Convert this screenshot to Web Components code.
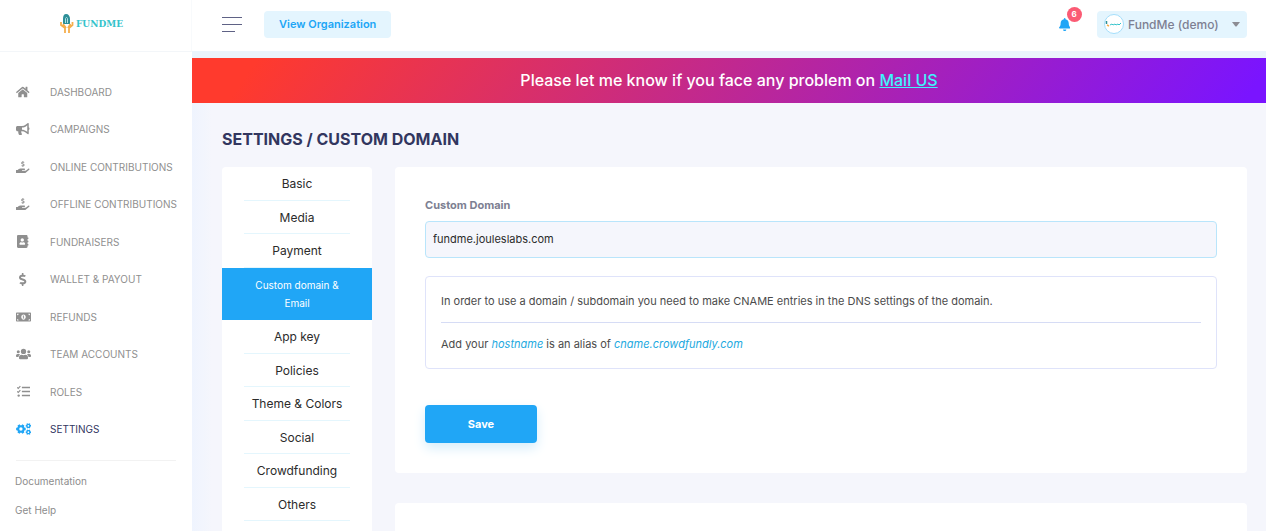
<!DOCTYPE html>
<html lang="en">
<head>
<meta charset="utf-8">
<meta name="viewport" content="width=device-width, initial-scale=1">
<title>Settings / Custom Domain</title>
<style>
  :root {
    --blue: #20a6f6;
    --pale: #e4f5fe;
    --navy: #32365f;
    --muted: #7d7f92;
    --page: #f5f6fc;
  }
  * { box-sizing: border-box; }
  body { margin: 0; background: var(--page); font-family: Inter, "Liberation Sans", sans-serif; color: #2b2b2b; }
</style>
</head>
<body>
<fm-app>
  <fm-sidebar slot="side">
    <fm-link icon="home">DASHBOARD</fm-link>
    <fm-link icon="horn">CAMPAIGNS</fm-link>
    <fm-link icon="hand">ONLINE CONTRIBUTIONS</fm-link>
    <fm-link icon="hand">OFFLINE CONTRIBUTIONS</fm-link>
    <fm-link icon="book">FUNDRAISERS</fm-link>
    <fm-link icon="dollar">WALLET &amp; PAYOUT</fm-link>
    <fm-link icon="bill">REFUNDS</fm-link>
    <fm-link icon="team">TEAM ACCOUNTS</fm-link>
    <fm-link icon="tasks">ROLES</fm-link>
    <fm-link icon="cogs" active>SETTINGS</fm-link>
  </fm-sidebar>
  <fm-topbar slot="top"></fm-topbar>
  <fm-banner>Please let me know if you face any problem on</fm-banner>
  <fm-settings>
    <fm-tab slot="tabs">Basic</fm-tab>
    <fm-tab slot="tabs">Media</fm-tab>
    <fm-tab slot="tabs">Payment</fm-tab>
    <fm-tab slot="tabs" active>Custom domain &amp; Email</fm-tab>
    <fm-tab slot="tabs">App key</fm-tab>
    <fm-tab slot="tabs">Policies</fm-tab>
    <fm-tab slot="tabs">Theme &amp; Colors</fm-tab>
    <fm-tab slot="tabs">Social</fm-tab>
    <fm-tab slot="tabs">Crowdfunding</fm-tab>
    <fm-tab slot="tabs">Others</fm-tab>
    <fm-card><fm-domain-form></fm-domain-form></fm-card>
    <fm-card></fm-card>
  </fm-settings>
</fm-app>

<script>
const DOLLAR = 'M209.2 233.4l-108-31.6C88.7 198.2 80 186.5 80 173.5c0-16.3 13.2-29.5 29.5-29.5h66.3c12.2 0 24.2 3.7 34.2 10.5 6.1 4.1 14.3 3.1 19.5-2l34.8-34c7.1-6.9 6.1-18.4-1.8-24.5C238 74.8 207.4 64.1 176 64V16c0-8.8-7.2-16-16-16h-32c-8.8 0-16 7.2-16 16v48h-2.5C45.8 64-5.4 118.7.5 183.6c4.2 46.1 39.4 83.6 83.8 96.6l102.5 30c12.5 3.7 21.2 15.3 21.2 28.3 0 16.3-13.2 29.5-29.5 29.5h-66.3C100 368 88 364.3 78 357.5c-6.1-4.1-14.3-3.1-19.5 2l-34.8 34c-7.1 6.9-6.1 18.4 1.8 24.5 24.5 19.2 55.1 29.9 86.5 30v48c0 8.8 7.2 16 16 16h32c8.8 0 16-7.2 16-16v-48.2c46.6-.9 90.3-28.6 105.7-72.7 21.5-61.6-14.6-124.8-72.5-141.7z';

// Ring with teeth, used for the settings icon.
const gear = (cx, cy, r, hole, n) => {
  let d = '';
  for (let i = 0; i < n; i++) {
    const at = (f, k) => {
      const a = (i + f) / n * 2 * Math.PI;
      return (cx + Math.cos(a) * r * k).toFixed(1) + ' ' + (cy + Math.sin(a) * r * k).toFixed(1);
    };
    d += (i ? 'L' : 'M') + at(-.24, 1) + 'L' + at(.24, 1) + 'L' + at(.32, .8) + 'L' + at(.68, .8);
  }
  return `<path fill-rule="evenodd" d="${d}ZM${cx - hole} ${cy}a${hole} ${hole} 0 1 0 ${2 * hole} 0a${hole} ${hole} 0 1 0 ${-2 * hole} 0z"/>`;
};

const ICONS = {
  home: ['0 0 576 512', '<path d="M280.37 148.26L96 300.11V464a16 16 0 0 0 16 16l112.06-.29a16 16 0 0 0 15.92-16V368a16 16 0 0 1 16-16h64a16 16 0 0 1 16 16v95.64a16 16 0 0 0 16 16.05L464 480a16 16 0 0 0 16-16V300L295.67 148.26a12.19 12.19 0 0 0-15.3 0zM571.6 251.47L488 182.56V44.05a12 12 0 0 0-12-12h-56a12 12 0 0 0-12 12v72.61L318.47 43a48 48 0 0 0-61 0L4.34 251.47a12 12 0 0 0-1.6 16.9l25.5 31A12 12 0 0 0 45.15 301l235.22-193.74a12.19 12.19 0 0 1 15.3 0L530.9 301a12 12 0 0 0 16.9-1.6l25.5-31a12 12 0 0 0-1.7-16.93z"/>'],
  horn: ['0 0 576 512', '<path d="M576 240c0-23.63-12.95-44.04-32-55.12V32.01C544 23.26 537.02 0 512 0c-7.12 0-14.19 2.38-19.98 7.02l-85.03 68.03C364.28 109.19 310.66 128 256 128H64c-35.35 0-64 28.65-64 64v96c0 35.35 28.65 64 64 64h33.7c-1.39 10.48-2.18 21.14-2.18 32 0 39.77 9.26 77.35 25.56 110.94 5.19 10.69 16.52 17.06 28.4 17.06h74.28c26.05 0 41.69-29.84 25.9-50.56-16.4-21.52-26.15-48.36-26.15-77.44 0-11.11 1.62-21.79 4.41-32H256c54.66 0 108.28 18.81 150.98 52.95l85.03 68.03a32.023 32.023 0 0 0 19.98 7.02c24.92 0 32-22.78 32-32V295.13C563.05 284.04 576 263.63 576 240zm-96 141.42l-33.05-26.44C392.95 311.78 325.12 288 256 288v-96c69.12 0 136.95-23.78 190.95-66.98L480 98.58v282.84z"/>'],
  hand: ['0 0 576 512', `<path d="M565.3 328.1c-11.8-10.7-30.2-10-42.6 0L430.3 402c-11.3 9.1-25.4 14-40 14H272c-8.8 0-16-7.2-16-16s7.2-16 16-16h78.3c15.9 0 30.7-10.9 33.3-26.6 3.3-20-12.1-37.4-31.6-37.4H192c-27 0-53.1 9.3-74.1 26.3L71.4 384H16c-8.8 0-16 7.2-16 16v96c0 8.8 7.2 16 16 16h356.8c14.5 0 28.6-4.9 40-14L564 377c15.2-12.1 16.4-35.3 1.3-48.9z"/><path transform="translate(222 0) scale(.5)" d="${DOLLAR}"/>`],
  book: ['0 0 448 512', '<path d="M436 160c6.6 0 12-5.4 12-12v-40c0-6.6-5.4-12-12-12h-20V48c0-26.5-21.5-48-48-48H48C21.5 0 0 21.5 0 48v416c0 26.5 21.5 48 48 48h320c26.5 0 48-21.5 48-48v-48h20c6.6 0 12-5.4 12-12v-40c0-6.6-5.4-12-12-12h-20v-64h20c6.6 0 12-5.4 12-12v-40c0-6.6-5.4-12-12-12h-20v-64h20zm-228-32c35.3 0 64 28.7 64 64s-28.7 64-64 64-64-28.7-64-64 28.7-64 64-64zm112 236.8c0 10.6-10 19.2-22.4 19.2H118.4C106 384 96 375.4 96 364.8v-19.2c0-31.8 30.1-57.6 67.2-57.6h5c12.3 5.1 25.7 8 39.8 8s27.6-2.9 39.8-8h5c37.1 0 67.2 25.8 67.2 57.6v19.2z"/>'],
  dollar: ['0 0 288 512', `<path d="${DOLLAR}"/>`],
  bill: ['0 0 640 512', '<path fill-rule="evenodd" d="M32 64h576q32 0 32 32v320q0 32-32 32H32q-32 0-32-32V96q0-32 32-32zM320 144c-53 0-96 50-96 112s43 112 96 112 96-50 96-112-43-112-96-112zM48 112v64q64 0 64-64zM592 112v64q-64 0-64-64zM48 400v-64q64 0 64 64zM592 400v-64q-64 0-64 64z"/><path d="M304 192h32v96h16v32h-64v-32h16v-56h-16v-30z"/>'],
  team: ['0 0 640 512', '<circle cx="96" cy="160" r="64"/><circle cx="544" cy="160" r="64"/><circle cx="320" cy="144" r="112"/><path d="M64 256h64q26 0 45 19-58 32-69 109H32q-32 0-32-32v-32q0-64 64-64zM576 256h-64q-26 0-45 19 58 32 69 109h72q32 0 32-32v-32q0-64-64-64zM243 288q77 36 154 0 115 0 115 115v29q0 48-48 48H176q-48 0-48-48v-29q0-115 115-115z"/>'],
  tasks: ['0 0 512 512', '<g fill="none" stroke="currentColor" stroke-width="44"><path d="M8 92l42 40L132 44M8 252l42 40 82-88"/><path stroke-width="62" d="M192 96h320M192 256h320M192 416h320"/></g><circle cx="66" cy="416" r="46"/>'],
  cogs: ['0 0 640 512', gear(210, 256, 210, 72, 6) + gear(528, 120, 118, 36, 6) + gear(528, 392, 118, 36, 6)],
  bell: ['0 0 448 512', '<path d="M224 512c35.32 0 63.97-28.65 63.97-64H160.03c0 35.35 28.65 64 63.97 64zm215.39-149.71c-19.32-20.76-55.47-51.99-55.47-154.29 0-77.7-54.48-139.9-127.94-155.16V32c0-17.67-14.32-32-31.98-32s-31.98 14.33-31.98 32v20.84C118.56 68.1 64.08 130.3 64.08 208c0 102.3-36.15 133.53-55.47 154.29-6 6.45-8.66 14.16-8.61 21.71.11 16.4 12.98 32 32.1 32h383.8c19.12 0 32-15.6 32.1-32 .05-7.55-2.61-15.27-8.61-21.71z"/>']
};
const icon = (name, h) => {
  const [box, body] = ICONS[name];
  return `<svg viewBox="${box}" height="${h}" fill="currentColor" aria-hidden="true">${body}</svg>`;
};

const BASE = '*{box-sizing:border-box}a{color:inherit;text-decoration:none}button,input{font:inherit}svg{display:block;flex:none}';
const define = (tag, css, html) => customElements.define(tag, class extends HTMLElement {
  constructor() {
    super();
    this.attachShadow({ mode: 'open' }).innerHTML =
      `<style>${BASE}${css}</style>${typeof html === 'function' ? html(this) : html}`;
  }
});

define('fm-app', `
  :host{display:grid;grid-template-columns:192px minmax(0,1fr);height:100vh;overflow:hidden}
  .main{min-width:0;overflow:hidden;background:linear-gradient(90deg,#eff4fe,var(--page) 20px)}
`, `<slot name="side"></slot><div class="main"><slot name="top"></slot><main><slot></slot></main></div>`);

define('fm-sidebar', `
  :host{display:block;background:#fff;font-size:10px;color:#8d8d8d}
  .logo{display:flex;align-items:center;justify-content:center;gap:2px;height:52px;padding:0 8px 4px 0;
    border-bottom:1px solid #f3f6f9;border-right:1px solid #f8fafc;
    font:bold 9px "DejaVu Serif",serif;color:#35c3cb}
  nav{padding-top:21px}
  ::slotted(:nth-child(odd)){height:37px}
  .foot{display:flex;flex-direction:column;margin:12px 16px 0;padding-top:10px;border-top:1px solid #f2f2f2;line-height:20px;gap:9px}
  .foot a{margin-left:-1px}
`, `<a class="logo" href="#">
  <svg width="14" height="20" viewBox="0 0 14 20"><path fill="#2d8f98" d="M3 10V4.500C3 2 4 0 6 0c2.500 0 4 2 4 5v5z"/><path d="M5.500 9V4.500Q6.500 2 7.500 4.500V9" fill="none" stroke="#aedfe2"/><path d="M1 8v3l4 3v5M12.500 8v3L9 14v5M3 10l3 4M10.500 10L8 14" fill="none" stroke="#f6ae4c" stroke-width="1.800"/></svg>
  <span>FUNDME</span></a>
  <nav aria-label="Main"><slot></slot></nav>
  <div class="foot"><a href="#">Documentation</a><a href="#">Get Help</a></div>`);

define('fm-link', `
  :host{display:flex;height:38px;align-items:center;color:#8f8f8f}
  a{display:flex;align-items:center;flex:1;padding-left:15px;white-space:nowrap}
  .i{display:flex;justify-content:center;width:16px;margin-right:19px}
  :host([active]){color:var(--navy)}
  :host([active]) .i{color:var(--blue)}
`, el => {
  const n = el.getAttribute('icon');
  return `<a href="#"><span class="i">${icon(n, n === 'tasks' || n === 'dollar' || n === 'book' ? 13 : 12)}</span><slot></slot></a>`;
});

define('fm-topbar', `
  :host{display:flex;align-items:center;height:51px;padding:0 19px 3px 30px;background:#fff}
  .menu{display:flex;flex-direction:column;gap:6px;width:20px;padding:0;border:0;background:none}
  .menu i{height:1px;background:#5f6285}
  .menu i:last-child{width:13px}
  .view{margin-left:22px;padding:0 15px;border-radius:4px;background:var(--pale);color:var(--blue);font-size:11px;font-weight:600;line-height:27px}
  .bell{position:relative;margin-left:auto;padding:0;border:0;background:none;color:var(--blue)}
  .bell b{position:absolute;left:8px;top:-11px;width:15px;height:15px;border-radius:50%;background:#fb5b74;color:#fff;font-size:8px;line-height:15px;text-align:center}
  .org{display:flex;align-items:center;width:150px;height:27px;margin-left:27px;padding:0 7px;border:0;border-radius:4px;background:var(--pale);color:var(--muted);font-size:12px;font-weight:500}
  .org span{flex:1;margin-left:4px;text-align:left;white-space:nowrap}
`, `<button class="menu" aria-label="Toggle menu"><i></i><i></i><i></i></button>
  <a class="view" href="#">View Organization</a>
  <button class="bell" aria-label="Notifications">${icon('bell', 13)}<b>6</b></button>
  <button class="org"><svg width="20" height="20" viewBox="0 0 20 20"><circle cx="10" cy="10" r="9.500" fill="#fff" stroke="#a4defb"/><path d="M2.500 7v3" stroke="#2d8f98" stroke-width="1.500"/><path d="M3 11l2 1" stroke="#f6ae4c" stroke-width="1.500"/><path d="M6 11l2-1 1 1 2-1 1 1 2-1 1 1 2-2" fill="none" stroke="#35c3cb"/></svg>
  <span>FundMe (demo)</span><svg width="8" height="5" viewBox="0 0 8 5"><path d="M0 0h8L4.500 4.500h-1z" fill="#8c8c93"/></svg></button>`);

define('fm-banner', `
  :host{display:block;margin-top:7px;background:linear-gradient(125deg,#ff3a2d 0%,#ff3a2d 6%,#7a14ff 98%);box-shadow:0 -7px #eaf4fc;color:#fff;text-align:center;font-size:16px;font-weight:500;line-height:45px}
  a{color:#3ff4fb;text-decoration:underline}
`, `<slot></slot> <a href="#">Mail US</a>`);

define('fm-settings', `
  :host{display:block;padding:24px 19px 0 30px}
  h1{margin:0 0 15px;font-size:16px;font-weight:700;line-height:25px;color:var(--navy)}
  .cols{display:grid;grid-template-columns:150px minmax(0,1fr);gap:23px;align-items:start}
  nav{padding-bottom:20px;border-radius:4px;background:#fff}
  .cards{display:grid;gap:30px}
  ::slotted(fm-tab:nth-of-type(even):not([active])){height:33px}
`, `<h1>SETTINGS / CUSTOM DOMAIN</h1><div class="cols"><nav aria-label="Settings"><slot name="tabs"></slot></nav><div class="cards"><slot></slot></div></div>`);

define('fm-tab', `
  :host{display:flex;height:34px;padding:0 22px;font-size:12px;text-align:center}
  a{display:flex;flex:1;align-items:center;justify-content:center;border-bottom:1px solid #e4f6fd}
  :host([active]){height:52px;padding:0 30px;background:var(--blue);color:#fff;font-size:10px;line-height:18px}
  :host([active]) a{border:0}
`, `<a href="#"><span><slot></slot></span></a>`);

define('fm-card', `:host{display:block;min-height:90px;padding:30px;border-radius:4px;background:#fff}`, `<slot></slot>`);

define('fm-domain-form', `
  :host{display:block;color:#4b4b4b;font-size:11px}
  form{display:flex;flex-direction:column;align-items:stretch}
  label{color:var(--muted);font-size:11px;font-weight:700;line-height:16px}
  input{height:37px;margin:8px 0 18px;padding:0 7px 1px;border:1px solid #b9e5fb;border-radius:4px;background:var(--page);color:#2b2b2b;font-size:11px}
  .note{padding:15px;border:1px solid #dfe3fa;border-radius:4px;line-height:18px}
  p{margin:0}
  hr{margin:12px 0;border:0;border-top:1px solid #d6dcf5}
  em{color:#22a9e0}
  button{align-self:flex-start;width:112px;height:38px;margin-top:36px;border:0;border-radius:4px;background:var(--blue);box-shadow:0 5px 12px #d5edfa;color:#fff;font-size:11px;font-weight:700}
`, `<form onsubmit="return false"><label for="domain">Custom Domain</label><input id="domain" type="text" value="fundme.jouleslabs.com">
  <div class="note"><p>In order to use a domain / subdomain you need to make CNAME entries in the DNS settings of the domain.</p><hr>
  <p>Add your <em>hostname</em> is an alias of <em>cname.crowdfundly.com</em></p></div>
  <button type="submit">Save</button></form>`);
</script>
</body>
</html>
